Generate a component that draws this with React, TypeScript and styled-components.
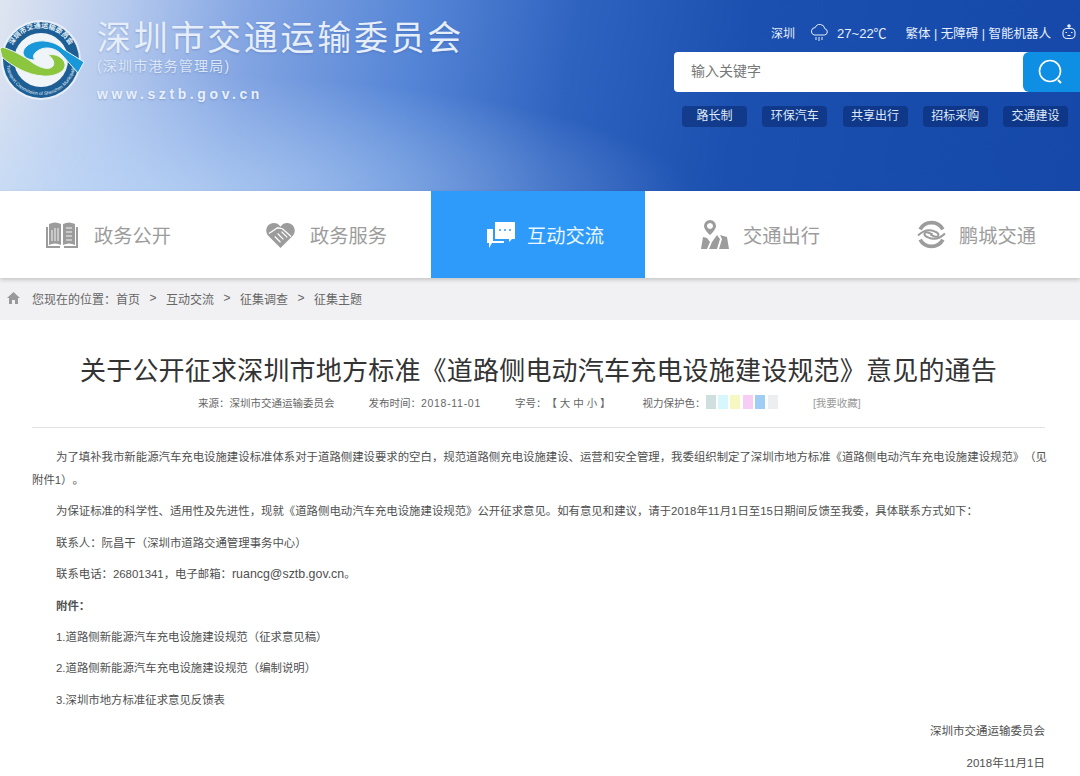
import React from "react";
import styled, { createGlobalStyle } from "styled-components";

const Global = createGlobalStyle`
  html, body { margin: 0; padding: 0; background: #fff; }
  body {
    font-family: "Liberation Sans", "Noto Sans CJK SC", sans-serif;
    overflow: hidden;
    text-spacing-trim: space-all;
  }
  * { box-sizing: border-box; }
`;

const Page = styled.div`
  width: 1080px;
  height: 776px;
  overflow: hidden;
  display: flex;
  flex-direction: column;
`;

const Banner = styled.header`
  flex: none;
  height: 191px;
  display: flex;
  justify-content: space-between;
  background:
    radial-gradient(ellipse 520px 120px at 170px 195px, rgba(190, 216, 248, 0.7), rgba(190, 216, 248, 0) 100%),
    linear-gradient(100deg, #dfe5f1 0%, #b5caee 11%, #82a4e2 23%, #5585d6 38%, #2f63c0 52%, #1b50b0 68%, #1548a8 100%);
`;

const Brand = styled.div`
  display: flex;
  gap: 5px;
  padding-top: 19px;
  align-items: flex-start;
`;

const BrandText = styled.div`
  display: flex;
  flex-direction: column;
  text-shadow: 0 1px 2px rgba(40, 70, 130, 0.25);
`;

const SiteName = styled.div`
  font-size: 34px;
  line-height: 38px;
  letter-spacing: 2.7px;
  color: #e6eefa;
  white-space: nowrap;
`;

const SiteSub = styled.div`
  font-size: 14px;
  line-height: 16px;
  letter-spacing: 1.2px;
  color: #dbe6f7;
  margin-top: 1px;
`;

const SiteUrl = styled.div`
  font-size: 14px;
  font-weight: 700;
  line-height: 18px;
  letter-spacing: 3.6px;
  color: #e8f0fb;
  margin-top: 11px;
`;

const Tools = styled.div`
  width: 406px;
  padding-top: 21px;
  display: flex;
  flex-direction: column;
`;

const TopLine = styled.div`
  height: 22px;
  display: flex;
  align-items: center;
  justify-content: flex-end;
  font-size: 12px;
  color: #e6effa;
  padding-right: 4px;
  white-space: nowrap;
`;

const City = styled.span`
  margin-right: 14px;
`;

const Temp = styled.span`
  margin: 0 19px 0 8px;
  font-size: 13px;
`;

const Links = styled.span`
  margin-right: 11px;
  font-size: 12.5px;
`;

const SearchBar = styled.div`
  margin-top: 9px;
  height: 40px;
  display: flex;
  background: #fff;
  border-radius: 4px 0 0 4px;
`;

const SearchInput = styled.div`
  flex: 1;
  padding-left: 17px;
  font-size: 14px;
  line-height: 38px;
  color: #777;
`;

const SearchButton = styled.div`
  width: 57px;
  background: #0f8fe3;
  border-radius: 6px 0 0 6px;
  display: flex;
  align-items: center;
  padding-left: 15px;
`;

const QuickLinks = styled.div`
  margin: 14px 0 0 8px;
  display: flex;
  gap: 15.25px;
`;

const QuickLink = styled.div`
  width: 65px;
  height: 21px;
  background: rgba(10, 40, 110, 0.55);
  border-radius: 4px;
  color: #dfe9f7;
  font-size: 12px;
  line-height: 21px;
  text-align: center;
`;

const Nav = styled.nav`
  flex: none;
  height: 87px;
  display: grid;
  grid-template-columns: 215px 216px 214px 218px 217px;
  position: relative;
  background: #fff;
  box-shadow: 0 2px 4px rgba(0, 0, 0, 0.18);
`;

const NavItem = styled.div<{ $active?: boolean; $left: number; $gap: number }>`
  display: flex;
  align-items: center;
  padding-left: ${({ $left }) => $left}px;
  gap: ${({ $gap }) => $gap}px;
  font-size: 19.25px;
  color: ${({ $active }) => ($active ? "#eaf6ff" : "#9c9c9c")};
  background: ${({ $active }) => ($active ? "#2e9bfb" : "transparent")};
`;

const Crumbs = styled.div`
  flex: none;
  height: 42px;
  background: #f1f1f3;
  display: flex;
  align-items: center;
  padding: 0 0 2px 7px;
  font-size: 12px;
  color: #666;
`;

const CrumbText = styled.span`
  margin-left: 12px;
`;

const CrumbSep = styled.span`
  margin: 0 9.5px;
`;

const Article = styled.main`
  flex: 1;
  padding: 0 35px 0 32px;
`;

const Title = styled.h1`
  margin: 36px 0 0 0;
  font-size: 26px;
  line-height: 30px;
  letter-spacing: 0.2px;
  font-weight: 400;
  color: #333;
  text-align: center;
  white-space: nowrap;
`;

const Meta = styled.div`
  margin-top: 9px;
  height: 33px;
  border-bottom: 1px solid #e2e2e2;
  display: flex;
  align-items: flex-start;
  padding-left: 166px;
  font-size: 10.5px;
  line-height: 16px;
  color: #666;
  white-space: nowrap;
`;

const MetaItem = styled.span<{ $gap: number }>`
  margin-right: ${({ $gap }) => $gap}px;
`;

const MetaDate = styled.span`
  letter-spacing: 0.7px;
`;

const Swatch = styled.span<{ $color: string }>`
  width: 10px;
  height: 14px;
  margin-right: 2.4px;
  background: ${({ $color }) => $color};
`;

const Collect = styled.span`
  margin-left: 33px;
  color: #999;
`;

const Body = styled.div`
  padding-top: 18px;
`;

const Para = styled.p`
  margin: 0 -2px 8.4px 0;
  font-size: 11.4px;
  line-height: 23px;
  color: #505050;
  text-indent: 24px;
`;

const Email = styled.span`
  font-size: 12.4px;
`;

const Sign = styled.p`
  margin: 0 0 8.4px 0;
  font-size: 11.5px;
  line-height: 23px;
  color: #505050;
  text-align: right;
`;

// viewBox starts at y=19 so the coordinates below read as page coordinates
const Logo = () => (
  <svg width="92" height="92" viewBox="0 19 92 92">
    <defs>
      <path id="ringTop" d="M9 60 A32 32 0 0 1 73 60" />
      <path id="ringBottom" d="M6 60 A35 35 0 0 0 76 60" />
    </defs>
    <circle cx="41" cy="60" r="40" fill="#f2f6fb" opacity="0.75" />
    <circle cx="41" cy="60" r="38" fill="#1d5f95" />
    <circle cx="41" cy="60" r="27" fill="#eef4f8" />
    <text fontSize="7" fill="#e8f2fa" fontWeight="700" textAnchor="middle">
      <textPath href="#ringTop" startOffset="50%">深圳市交通运输委员会</textPath>
    </text>
    <text fontSize="4.6" fill="#e8f2fa" textAnchor="middle">
      <textPath href="#ringBottom" startOffset="50%">Transport Commission of Shenzhen Municipality</textPath>
    </text>
    <path
      d="M0 49 L2 47 C12 50 24 56 33 63 C42 69 50 70 53 66 C55 63 53 58 48 55 C56 53 64 58 65 64 C66 72 54 77 43 76 C27 75 12 66 2 57Z"
      fill="#8cc63f"
      stroke="#eef4f8"
      strokeWidth="1"
    />
    <path
      d="M84 62 L78 73 L62 55 C56 48 46 46 39 50 C34 53 32 56 35 60 C28 60 23 57 23 52 C25 44 36 40 45 41 C52 42 58 44 63 49Z"
      fill="#1898d8"
      stroke="#eef4f8"
      strokeWidth="1"
    />
  </svg>
);

const Cloud = () => (
  <svg width="20" height="20" viewBox="0 0 20 20" fill="none" stroke="#e6effa" strokeWidth="1">
    <path d="M5 13 H15.5 a3.2 3.2 0 0 0 .3-6.3 A5 5 0 0 0 6.2 5.6 A3.8 3.8 0 0 0 5 13Z" />
    <path d="M7 15v3M10 15v4M13 15v3" />
  </svg>
);

const Robot = () => (
  <svg width="14" height="16" viewBox="0 0 14 16" fill="none" stroke="#e6effa" strokeWidth="1.1">
    <circle cx="7" cy="2" r="1.2" fill="#e6effa" />
    <rect x="1" y="4.5" width="12" height="10" rx="4" />
    <path d="M3.5 8.5h1.5M9 8.5h1.5M5.5 11.5h3" />
  </svg>
);

const SearchIcon = () => (
  <svg width="26" height="26" viewBox="0 0 26 26" fill="none" stroke="#fff" strokeWidth="1.6">
    <circle cx="12" cy="12" r="10.5" />
    <path d="M20 21 L23 24" strokeWidth="2" />
  </svg>
);

const BookIcon = () => (
  <svg width="32" height="26" viewBox="0 0 32 26" fill="#9c9c9c">
    <path d="M3 2 C7 0 11 0 15 2 V23 C11 21 7 21 3 23Z M17 2 C21 0 25 0 29 2 V23 C25 21 21 21 17 23Z" />
    <path d="M0 5 H2 V24 H14 V26 H0Z M32 5 H30 V24 H18 V26 H32Z" />
    <path d="M6 8v11M9 6v13M12 6v13" stroke="#fff" strokeWidth="0.9" />
    <path d="M20 6h6M20 10h6M20 14h6M20 18h6" stroke="#fff" strokeWidth="0.9" />
  </svg>
);

const HeartIcon = () => (
  <svg width="29" height="26" viewBox="0 0 30 27" fill="#9c9c9c">
    <path d="M15 27 L2 14 C-2 9 1 1 8 1 C11 1 13 2 15 5 C17 2 19 1 22 1 C29 1 32 9 28 14Z" />
    <path d="M3 12 L12 6 L17 7 L26 15 M9 15 L15 21 M12 12 L18 18 M16 10 L22 16" stroke="#fff" strokeWidth="1.3" fill="none" />
  </svg>
);

const ChatIcon = () => (
  <svg width="30" height="28" viewBox="0 0 30 28" fill="#fff">
    <path d="M9 1 H29 V18 H26 L23 21 V18 H9Z" />
    <path d="M1 8 H7 V20 H18 V22 H6 L3 27 V22 H1Z" />
    <circle cx="14" cy="9" r="1" fill="#2e9bfb" />
    <circle cx="19" cy="9" r="1" fill="#2e9bfb" />
    <circle cx="24" cy="9" r="1" fill="#2e9bfb" />
  </svg>
);

const MapIcon = () => (
  <svg width="28" height="30" viewBox="0 0 28 30" fill="#9c9c9c">
    <path d="M9 0 a6 6 0 0 1 6 6 c0 4 -6 9 -6 9 s-6 -5 -6 -9 a6 6 0 0 1 6 -6Z M9 3 a3 3 0 1 0 .01 0Z" fillRule="evenodd" />
    <path d="M2 17 L6 18 L9 22 L6 29 H0Z M8 29 L11 22 L16 15 L19 19 L16 29Z M18 29 L21 19 L19 15 L26 17 L28 29Z" />
  </svg>
);

const SwirlIcon = () => (
  <svg width="29" height="29" viewBox="0 0 28 28" fill="none" stroke="#9c9c9c">
    <path d="M3 9 A12.5 12.5 0 0 1 25 9" strokeWidth="3.6" />
    <path d="M25 19 A12.5 12.5 0 0 1 3 19" strokeWidth="3.6" />
    <path d="M1 15 C7 9 12 9 17 11 C20 12 22 14 20 16 C18 17 15 15 13 14" strokeWidth="2" />
    <path d="M27 13 C21 19 16 19 11 17 C8 16 6 14 8 12 C10 11 13 13 15 14" strokeWidth="2" />
  </svg>
);

const HomeIcon = () => (
  <svg width="13" height="12" viewBox="0 0 13 12" fill="#999">
    <path d="M6.5 0 L13 6 H11 V12 H8 V8 H5 V12 H2 V6 H0Z" />
  </svg>
);

const quick = ["路长制", "环保汽车", "共享出行", "招标采购", "交通建设"];
const swatches = ["#cfdfe0", "#d6f7fb", "#f6f8c4", "#f8cdf5", "#9fcdf4", "#eceef0"];
const crumbs = ["互动交流", "征集调查", "征集主题"];

export default function App() {
  return (
    <Page>
      <Global />
      <Banner>
        <Brand>
          <Logo />
          <BrandText>
            <SiteName>深圳市交通运输委员会</SiteName>
            <SiteSub>(深圳市港务管理局)</SiteSub>
            <SiteUrl>www.sztb.gov.cn</SiteUrl>
          </BrandText>
        </Brand>
        <Tools>
          <TopLine>
            <City>深圳</City>
            <Cloud />
            <Temp>27~22℃</Temp>
            <Links>繁体 | 无障碍 | 智能机器人</Links>
            <Robot />
          </TopLine>
          <SearchBar>
            <SearchInput>输入关键字</SearchInput>
            <SearchButton>
              <SearchIcon />
            </SearchButton>
          </SearchBar>
          <QuickLinks>
            {quick.map((q) => (
              <QuickLink key={q}>{q}</QuickLink>
            ))}
          </QuickLinks>
        </Tools>
      </Banner>
      <Nav>
        <NavItem $left={46} $gap={16}><BookIcon />政务公开</NavItem>
        <NavItem $left={51} $gap={15}><HeartIcon />政务服务</NavItem>
        <NavItem $active $left={55} $gap={11}><ChatIcon />互动交流</NavItem>
        <NavItem $left={56} $gap={14}><MapIcon />交通出行</NavItem>
        <NavItem $left={54} $gap={13}><SwirlIcon />鹏城交通</NavItem>
      </Nav>
      <Crumbs>
        <HomeIcon />
        <CrumbText>您现在的位置：首页</CrumbText>
        {crumbs.map((c) => (
          <React.Fragment key={c}>
            <CrumbSep>&gt;</CrumbSep>
            <span>{c}</span>
          </React.Fragment>
        ))}
      </Crumbs>
      <Article>
        <Title>关于公开征求深圳市地方标准《道路侧电动汽车充电设施建设规范》意见的通告</Title>
        <Meta>
          <MetaItem $gap={34}>来源：深圳市交通运输委员会</MetaItem>
          <MetaItem $gap={34}>发布时间：<MetaDate>2018-11-01</MetaDate></MetaItem>
          <MetaItem $gap={32}>字号：【 大 中 小 】</MetaItem>
          <MetaItem $gap={0}>视力保护色：</MetaItem>
          {swatches.map((s) => (
            <Swatch key={s} $color={s} />
          ))}
          <Collect>[我要收藏]</Collect>
        </Meta>
        <Body>
          <Para>为了填补我市新能源汽车充电设施建设标准体系对于道路侧建设要求的空白，规范道路侧充电设施建设、运营和安全管理，我委组织制定了深圳市地方标准《道路侧电动汽车充电设施建设规范》（见附件1）。</Para>
          <Para>为保证标准的科学性、适用性及先进性，现就《道路侧电动汽车充电设施建设规范》公开征求意见。如有意见和建议，请于2018年11月1日至15日期间反馈至我委，具体联系方式如下：</Para>
          <Para>联系人：阮昌干（深圳市道路交通管理事务中心）</Para>
          <Para>联系电话：26801341，电子邮箱：<Email>ruancg@sztb.gov.cn</Email>。</Para>
          <Para><b>附件：</b></Para>
          <Para>1.道路侧新能源汽车充电设施建设规范（征求意见稿）</Para>
          <Para>2.道路侧新能源汽车充电设施建设规范（编制说明）</Para>
          <Para>3.深圳市地方标准征求意见反馈表</Para>
          <Sign>深圳市交通运输委员会</Sign>
          <Sign>2018年11月1日</Sign>
        </Body>
      </Article>
    </Page>
  );
}
